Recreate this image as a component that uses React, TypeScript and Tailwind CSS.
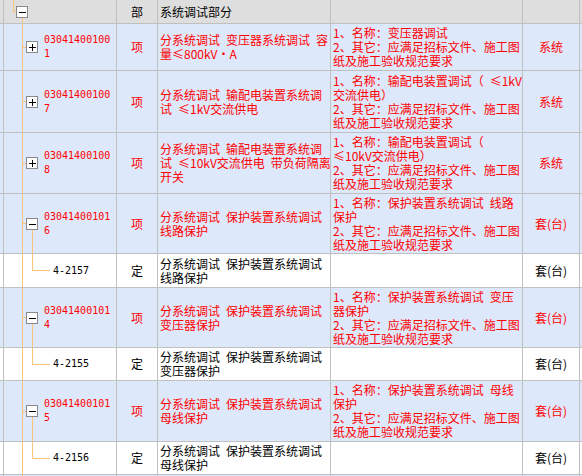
import React from 'react'

type Item = {
  kind: 'item' | 'sub' | 'blank'
  code: string[]
  type: string
  name: string[]
  desc: string[]
  unit: string
  open?: boolean
}

const OTHER = ['2、其它：应满足招标文件、施工图', '纸及施工验收规范要求']

const ROWS: Item[] = [
  {
    kind: 'item',
    code: ['03041400100', '1'],
    type: '项',
    name: ['分系统调试 变压器系统调试 容', '量≤800kV·A'],
    desc: ['1、名称：变压器调试', ...OTHER],
    unit: '系统',
  },
  {
    kind: 'item',
    code: ['03041400100', '7'],
    type: '项',
    name: ['分系统调试 输配电装置系统调', '试 ≤1kV交流供电'],
    desc: ['1、名称：输配电装置调试（ ≤1kV', '交流供电）', ...OTHER],
    unit: '系统',
  },
  {
    kind: 'item',
    code: ['03041400100', '8'],
    type: '项',
    name: ['分系统调试 输配电装置系统调', '试 ≤10kV交流供电 带负荷隔离', '开关'],
    desc: ['1、名称：输配电装置调试（', '≤10kV交流供电）', ...OTHER],
    unit: '系统',
  },
  {
    kind: 'item',
    open: true,
    code: ['03041400101', '6'],
    type: '项',
    name: ['分系统调试 保护装置系统调试', '线路保护'],
    desc: ['1、名称：保护装置系统调试 线路', '保护', ...OTHER],
    unit: '套(台)',
  },
  { kind: 'sub', code: ['4-2157'], type: '定', name: ['分系统调试 保护装置系统调试', '线路保护'], desc: [], unit: '套(台)' },
  {
    kind: 'item',
    open: true,
    code: ['03041400101', '4'],
    type: '项',
    name: ['分系统调试 保护装置系统调试', '变压器保护'],
    desc: ['1、名称：保护装置系统调试 变压', '器保护', ...OTHER],
    unit: '套(台)',
  },
  { kind: 'sub', code: ['4-2155'], type: '定', name: ['分系统调试 保护装置系统调试', '变压器保护'], desc: [], unit: '套(台)' },
  {
    kind: 'item',
    open: true,
    code: ['03041400101', '5'],
    type: '项',
    name: ['分系统调试 保护装置系统调试', '母线保护'],
    desc: ['1、名称：保护装置系统调试 母线', '保护', ...OTHER],
    unit: '套(台)',
  },
  { kind: 'sub', code: ['4-2156'], type: '定', name: ['分系统调试 保护装置系统调试', '母线保护'], desc: [], unit: '套(台)' },
  { kind: 'blank', code: [], type: '', name: [], desc: [], unit: '' },
]

function Box({ open }: { open: boolean }) {
  return (
    <svg width="12" height="12" viewBox="0 0 12 12" shapeRendering="crispEdges" className="block shrink-0">
      <rect x="0.5" y="0.5" width="11" height="11" fill="#ffffff" stroke="#8a8a8a" />
      <path d="M3 6.5H10" stroke="#000000" />
      {!open && <path d="M6.5 3V10" stroke="#000000" />}
    </svg>
  )
}

// one text block per cell; half-width spaces like the grid's font
function Lines({ lines }: { lines: string[] }) {
  if (!lines.length) return null
  return <div className="whitespace-pre">{lines.join('\n').replace(/ /g, '\u2002')}</div>
}

function TreeCell({ row }: { row: Item }) {
  if (row.kind === 'blank') {
    return (
      <div className="flex h-full">
        <div className="w-[19px] shrink-0 border-r border-[#fcc47a]" />
      </div>
    )
  }
  if (row.kind === 'sub') {
    return (
      <div className="flex h-full">
        <div className="w-[19px] shrink-0 border-r border-[#fcc47a]" />
        <div className="w-[9px] shrink-0" />
        <div className="flex w-[18px] shrink-0 flex-col">
          <div className="flex-1 border-b border-l border-[#fcc47a]" />
          <div className="flex-1" />
        </div>
        <div className="ml-[3px] flex items-center font-['DejaVu_Sans_Mono',monospace] text-[10px] text-black">
          {row.code[0]}
        </div>
      </div>
    )
  }
  return (
    <div className="flex h-full">
      <div className="w-[19px] shrink-0 border-r border-[#fcc47a]" />
      <div className="flex w-[3px] shrink-0 items-center">
        <div className="h-px w-full bg-[#fcc47a]" />
      </div>
      <div className="flex w-3 shrink-0 flex-col">
        <div className="flex-1" />
        <Box open={!!row.open} />
        <div className="flex-1">{row.open && <div className="h-full w-[7px] border-r border-[#fcc47a]" />}</div>
      </div>
      <div className="ml-[6px] flex flex-col justify-center font-['DejaVu_Sans_Mono',monospace] text-[10px] text-[#ff0000]">
        <Lines lines={row.code} />
      </div>
    </div>
  )
}

function DataRow({ row }: { row: Item }) {
  const bg = row.kind === 'sub' ? 'bg-white' : 'bg-[#dde8fb]'
  const color = row.kind === 'sub' ? 'text-black' : 'text-[#ff0000]'
  return (
    <>
      <div className={bg} />
      <div className={`${bg} overflow-hidden`}>
        <TreeCell row={row} />
      </div>
      <div className={`${bg} ${color} flex items-center justify-center`}>{row.type}</div>
      <div className={`${bg} ${color} flex flex-col justify-center overflow-hidden pl-[2px]`}>
        <Lines lines={row.name} />
      </div>
      <div className={`${bg} ${color} flex flex-col justify-center overflow-hidden pl-[2px]`}>
        <Lines lines={row.desc} />
      </div>
      <div className={`${bg} ${color} flex items-center justify-center`}>{row.unit}</div>
      <div className={bg} />
    </>
  )
}

export default function App() {
  return (
    <div className="h-[476px] w-[582px] overflow-hidden bg-white font-['Noto_Sans_CJK_SC','Noto_Sans',sans-serif] text-[12px] leading-[14px]">
      <div className="grid grid-cols-[3px_112px_40px_172px_191px_56px_1fr] grid-rows-[23px_46px_61px_60px_59px_33px_59px_32px_60px_32px_20px] gap-px bg-[#c0c0c0]">
        {/* header */}
        <div className="bg-[#dedede]" />
        <div className="bg-[#dedede]">
          <div className="flex h-full">
            <div className="w-[9px] shrink-0" />
            <div className="flex w-[3px] shrink-0 flex-col">
              <div className="h-[12px] border-b border-l border-[#fcc47a]" />
            </div>
            <div className="flex w-3 shrink-0 flex-col">
              <div className="flex-1" />
              <Box open />
              <div className="flex-1">
                <div className="h-full w-[7px] border-r border-[#fcc47a]" />
              </div>
            </div>
          </div>
        </div>
        <div className="flex items-center justify-center bg-[#dedede] text-black">部</div>
        <div className="flex items-center bg-[#dedede] pl-[2px] text-black">系统调试部分</div>
        <div className="bg-[#dedede]" />
        <div className="bg-[#dedede]" />
        <div className="bg-[#dedede]" />

        {ROWS.map((r, i) => (
          <DataRow key={i} row={r} />
        ))}
      </div>
    </div>
  )
}
